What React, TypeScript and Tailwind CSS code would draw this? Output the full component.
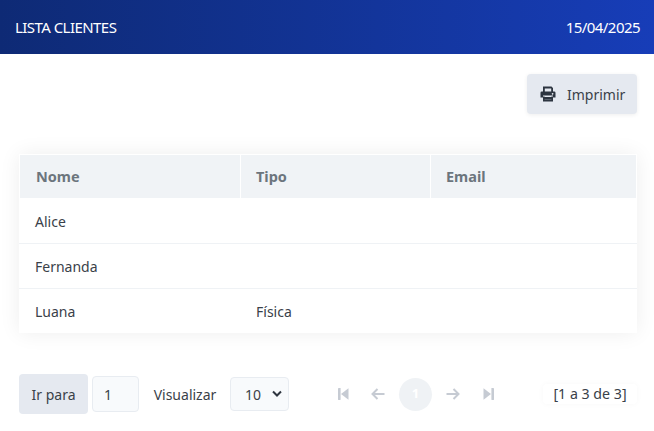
import React from "react";

function Step({ flip }: { flip?: boolean }) {
  return (
    <svg width="11" height="12" viewBox="0 0 11 12" className={flip ? "-scale-x-100" : ""} fill="currentColor">
      <rect x="0" y="0" width="2.6" height="12" rx="0.4" />
      <path d="M10.5 0.2 V11.8 L3 6 Z" />
    </svg>
  );
}

function Arrow({ flip }: { flip?: boolean }) {
  return (
    <svg width="14" height="12" viewBox="0 0 14 12" className={flip ? "-scale-x-100" : ""} fill="none" stroke="currentColor" strokeWidth="2">
      <path d="M13.5 6 H1.5 M6.5 1 L1.5 6 L6.5 11" />
    </svg>
  );
}

function Printer() {
  return (
    <svg width="16" height="16" viewBox="0 0 16 16" fill="#2d3540">
      <path fillRule="evenodd" d="M3 0.5 H11.5 L13 2 V6 H11.2 V2.4 H4.8 V6 H3 Z" />
      <path fillRule="evenodd" d="M1.8 5.5 H14.2 A1.3 1.3 0 0 1 15.5 6.8 V11.5 H13 V9.5 H3 V11.5 H0.5 V6.8 A1.3 1.3 0 0 1 1.8 5.5 Z M12.6 7 a0.8 0.8 0 1 0 0.01 0 Z" />
      <path d="M4.6 11 H11.4 V13.6 H4.6 Z M3 10.5 V15.5 H13 V10.5 H11.4 V13.8 H4.6 V10.5 Z" />
    </svg>
  );
}

const rows = [
  ["Alice", "", ""],
  ["Fernanda", "", ""],
  ["Luana", "Física", ""],
];

export default function App() {
  return (
    <div className="w-[654px] h-[431px] overflow-hidden bg-white text-[14px] text-[#3a4149] font-['Noto_Sans','Open_Sans',sans-serif]">
      <header className="h-[54px] flex items-center justify-between pl-[15px] pr-[14px] text-[15px] tracking-[-0.55px] text-white bg-gradient-to-r from-[#0e2a75] to-[#173db8]">
        <span>LISTA CLIENTES</span>
        <span>15/04/2025</span>
      </header>

      <div className="flex justify-end pt-5 pr-[17px]">
        <button className="w-[110px] h-10 flex items-center gap-[11px] pl-[13px] bg-[#e5e9f0] rounded-[4px] shadow-[0_1px_4px_rgba(0,0,0,0.07)]">
          <Printer />
          <span>Imprimir</span>
        </button>
      </div>

      <div className="mt-10 mx-[19px] w-[618px] bg-white shadow-[0_0_20px_rgba(0,0,0,0.07)]">
        <div className="border border-b-0 border-white">
          <div className="grid grid-cols-[220px_190px_206px] h-[43px] bg-[#f0f3f6] font-bold text-[14.5px] text-[#6c757d]">
            <div className="flex items-center pl-4">Nome</div>
            <div className="flex items-center pl-[15px] border-l border-white">Tipo</div>
            <div className="flex items-center pl-[15px] border-l border-white">Email</div>
          </div>
        </div>
        {rows.map((r, i) => (
          <div key={r[0]} className={`grid grid-cols-[221px_190px_207px] h-[45px] pt-px ${i > 0 ? "border-t border-[#eff2f5]" : ""}`}>
            <div className="flex items-center pl-4">{r[0]}</div>
            <div className="flex items-center pl-4">{r[1]}</div>
            <div className="flex items-center pl-4">{r[2]}</div>
          </div>
        ))}
      </div>

      <div className="mt-[41px] ml-[19px] w-[618px] h-10 flex items-center">
        <div className="w-[69px] h-10 flex items-center justify-center bg-[#e5e9f0] rounded-[4px]">Ir para</div>
        <div className="ml-1 w-[47px] h-[36px] flex items-center pl-[11px] bg-[#f8fafc] border border-[#e8ecf1] rounded-[4px]">1</div>
        <div className="ml-1 w-[82px] h-5 flex items-center justify-center pl-[2px] bg-white">Visualizar</div>
        <div className="ml-[5px] w-[59px] h-[34px] flex items-center justify-between pl-[14px] pr-[6px] bg-[#f8fafc] border border-[#e8ecf1] rounded-[4px]">
          <span>10</span>
          <svg width="10" height="8" viewBox="0 0 10 8" fill="none" stroke="#2f3640" strokeWidth="2">
            <path d="M1 1.5 L5 5.5 L9 1.5" />
          </svg>
        </div>
        <div className="ml-[48px] flex items-center text-[#c6cbd3]">
          <span className="w-[12px] flex justify-center"><Step /></span>
          <span className="w-[14px] ml-[22px] flex justify-center"><Arrow /></span>
          <span className="ml-[14px] w-[33px] h-[33px] rounded-full bg-[#eff2f5] flex items-center justify-center text-white font-bold text-[13px]">1</span>
          <span className="w-[14px] ml-[14px] flex justify-center"><Arrow flip /></span>
          <span className="w-[12px] ml-[22px] flex justify-center"><Step flip /></span>
        </div>
        <div className="ml-auto w-[94px] h-5 flex items-center justify-center text-[14.2px] bg-white rounded-[4px] shadow-[0_0_6px_rgba(0,0,0,0.03)]">[1 a 3 de 3]</div>
      </div>
    </div>
  );
}
